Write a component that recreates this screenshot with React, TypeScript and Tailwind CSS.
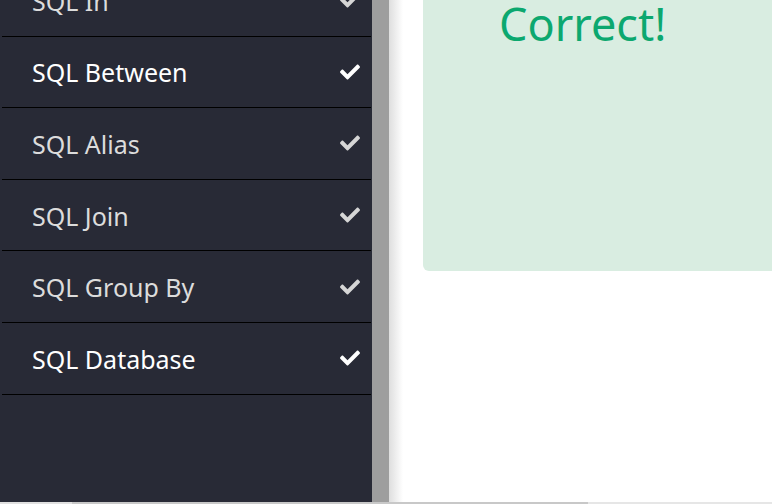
import React from 'react'

const items = [
  { label: 'SQL In', active: false },
  { label: 'SQL Between', active: true },
  { label: 'SQL Alias', active: false },
  { label: 'SQL Join', active: false },
  { label: 'SQL Group By', active: false },
  { label: 'SQL Database', active: true },
]

function Check({ className }: { className?: string }) {
  return (
    <svg viewBox="0 0 512 512" className={className} fill="currentColor">
      <path d="M173.9 439.4 7.5 273c-10-10-10-26.2 0-36.2l36.2-36.2c10-10 26.2-10 36.2 0L192 312.7 432.1 72.6c10-10 26.2-10 36.2 0l36.2 36.2c10 10 10 26.2 0 36.2L210.1 439.4c-10 10-26.2 10-36.2 0z" />
    </svg>
  )
}

export default function App() {
  return (
    <div
      className="relative flex h-[504px] w-[772px] overflow-hidden bg-white"
      style={{ fontFamily: '"Segoe UI", "Noto Sans", "Open Sans", sans-serif' }}
    >
      {/* sidebar */}
      <div className="h-[502px] w-[372px] shrink-0 overflow-hidden bg-[#282a36]">
        <div className="-mt-[35px] pl-[2px] pr-[1px]">
          {items.map((item) => (
            <div
              key={item.label}
              className="flex h-[71.6px] items-center justify-between border-b border-black pl-[30px] pr-[10px]"
            >
              <span
                className={
                  'pt-[2px] text-[25px] leading-none ' +
                  (item.active ? 'text-white' : 'text-[#dcdcdc]')
                }
              >
                {item.label}
              </span>
              <Check
                className={
                  'h-[20px] w-[22px] ' +
                  (item.active ? 'text-white' : 'text-[#d6d6d6]')
                }
              />
            </div>
          ))}
        </div>
      </div>

      {/* scrollbar strip */}
      <div className="h-[502px] w-[17px] shrink-0 bg-[#9e9e9e]" />

      {/* main */}
      <div className="relative h-[502px] flex-1">
        <div className="pointer-events-none absolute inset-y-0 left-0 w-[14px] bg-gradient-to-r from-[#dedede] to-white" />
        <div className="ml-[34px] flex h-[271px] items-start rounded-bl-[6px] bg-[#d9ede1] pl-[76px]">
          <span className="-mt-[10px] text-[45px] leading-normal text-[#0ca86f]">Correct!</span>
        </div>
      </div>

      {/* horizontal scroll track */}
      <div className="absolute bottom-0 left-0 flex h-[2px] w-full">
        <div className="w-[72px] bg-[#e0e0e0]" />
        <div className="w-[516px] bg-[#c8c8c8]" />
        <div className="flex-1 bg-[#e6e6e6]" />
      </div>
    </div>
  )
}
